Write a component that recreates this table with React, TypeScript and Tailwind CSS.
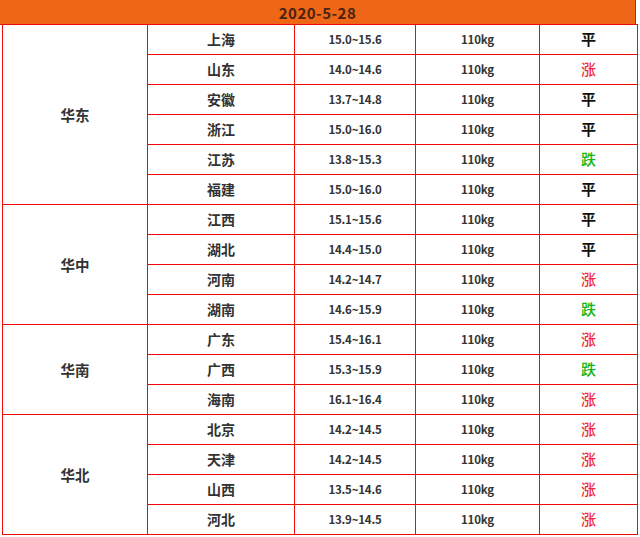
import React from 'react';

type Row = { city: string; range: string; trend: '平' | '涨' | '跌' };
type Group = { region: string; rows: Row[] };

const DATA: Group[] = [
  {
    region: '华东',
    rows: [
      { city: '上海', range: '15.0~15.6', trend: '平' },
      { city: '山东', range: '14.0~14.6', trend: '涨' },
      { city: '安徽', range: '13.7~14.8', trend: '平' },
      { city: '浙江', range: '15.0~16.0', trend: '平' },
      { city: '江苏', range: '13.8~15.3', trend: '跌' },
      { city: '福建', range: '15.0~16.0', trend: '平' },
    ],
  },
  {
    region: '华中',
    rows: [
      { city: '江西', range: '15.1~15.6', trend: '平' },
      { city: '湖北', range: '14.4~15.0', trend: '平' },
      { city: '河南', range: '14.2~14.7', trend: '涨' },
      { city: '湖南', range: '14.6~15.9', trend: '跌' },
    ],
  },
  {
    region: '华南',
    rows: [
      { city: '广东', range: '15.4~16.1', trend: '涨' },
      { city: '广西', range: '15.3~15.9', trend: '跌' },
      { city: '海南', range: '16.1~16.4', trend: '涨' },
    ],
  },
  {
    region: '华北',
    rows: [
      { city: '北京', range: '14.2~14.5', trend: '涨' },
      { city: '天津', range: '14.2~14.5', trend: '涨' },
      { city: '山西', range: '13.5~14.6', trend: '涨' },
      { city: '河北', range: '13.9~14.5', trend: '涨' },
    ],
  },
];

const trendClass = {
  平: 'text-[#111] font-bold',
  涨: 'text-[#f0283c] font-medium',
  跌: 'text-[#12b412] font-medium',
};

const cell = 'border border-[#ee0a0a] text-center align-middle p-0';

export default function App() {
  return (
    <div className="w-[640px] h-[537px] bg-white overflow-hidden font-['Noto_Sans_CJK_SC','Noto_Sans',sans-serif] text-[#333]">
      {/* Date header */}
      <div className="w-[636px] h-[25px] bg-[#ee6616] border-b border-r border-[#ee0a0a] flex items-center justify-center">
        <span className="text-[15px] font-bold text-[#4a2410] tracking-[0.5px] leading-none">2020-5-28</span>
      </div>

      <table className="ml-[2px] border-collapse table-fixed w-[635px] -mt-px">
        <colgroup>
          <col className="w-[145px]" />
          <col className="w-[147px]" />
          <col className="w-[121px]" />
          <col className="w-[124px]" />
          <col className="w-[98px]" />
        </colgroup>
        <tbody>
          {DATA.map((g) =>
            g.rows.map((r, i) => (
              <tr key={g.region + r.city} className="h-[30px]">
                {i === 0 && (
                  <td rowSpan={g.rows.length} className={`${cell} text-[14.5px] font-bold`}>
                    {g.region}
                  </td>
                )}
                <td className={`${cell} text-[14px] font-bold`}>{r.city}</td>
                <td className={`${cell} text-[11.5px] font-bold tracking-[-0.2px]`}>{r.range}</td>
                <td className={`${cell} text-[11.5px] font-bold tracking-[-0.2px]`}>110kg</td>
                <td className={`${cell} text-[15px] ${trendClass[r.trend]}`}>{r.trend}</td>
              </tr>
            ))
          )}
        </tbody>
      </table>
    </div>
  );
}
